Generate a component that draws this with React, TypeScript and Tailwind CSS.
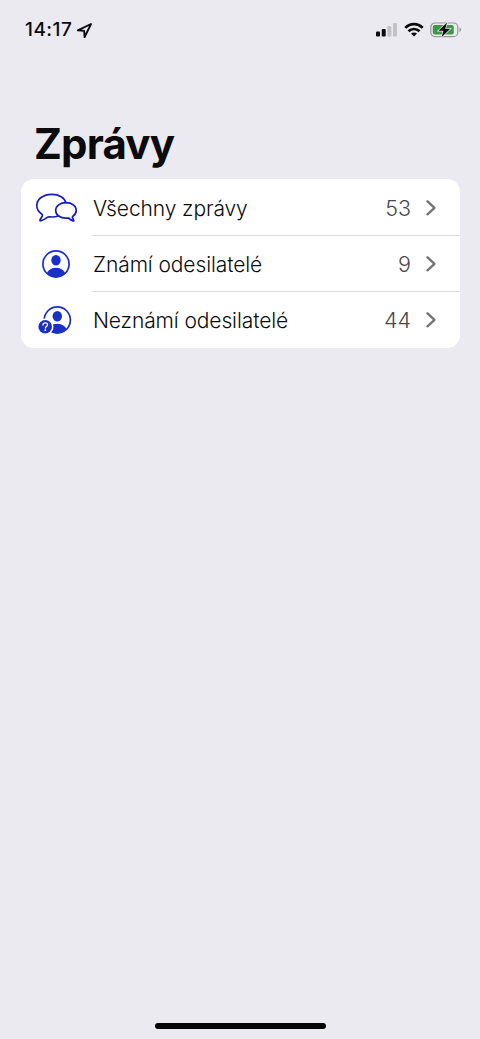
import type { ReactNode } from "react";

function BubblesIcon() {
  return (
    <svg width="44" height="32" viewBox="0 0 44 32" fill="none" stroke="#161fbe" strokeWidth="1.7" strokeLinejoin="round" strokeLinecap="round">
      <path d="M31.800 10.700C30.800 5.800 25.200 2.300 17.700 2.300 9.200 2.300 2.800 7.200 2.800 13.500c0 3.700 2.100 6.600 5.100 8.700.6.500.7.900.4 1.600-.5 1.200-1.400 2.600-2.200 3.900-.5.900 0 1.400.9 1.100 2.700-.8 4.700-2.200 6.300-3.400.7-.5 1.300-.6 2.200-.5 3.300.3 6.300 0 8.900-.9" />
      <path d="M32 10.600c-5.900 0-10.300 3.400-10.300 7.800s4.400 7.800 10.300 7.800c.9 0 1.700-.1 2.500-.2 1.400 1.200 2.900 2.300 4.600 2.900.7.200 1-.2.600-.8-.5-.9-.9-1.700-1.200-2.600-.2-.6-.1-.9.400-1.300 2.100-1.400 3.300-3.500 3.300-5.800 0-4.400-4.300-7.800-10.200-7.800z" />
    </svg>
  );
}

function PersonIcon() {
  return (
    <svg width="44" height="32" viewBox="0 0 44 32" fill="none">
      <defs>
        <clipPath id="person-circle">
          <circle cx="22" cy="16" r="13" />
        </clipPath>
      </defs>
      <ellipse cx="22" cy="12.200" rx="4.700" ry="5.200" fill="#1c2fc4" />
      <ellipse cx="22" cy="27.200" rx="9.700" ry="7.500" fill="#1c2fc4" clipPath="url(#person-circle)" />
      <circle cx="22" cy="16" r="13.100" stroke="#1c2fc4" strokeWidth="1.700" />
    </svg>
  );
}

function UnknownPersonIcon() {
  return (
    <svg width="44" height="32" viewBox="0 0 44 32" fill="none">
      <defs>
        <clipPath id="unknown-circle">
          <circle cx="23.300" cy="16" r="13" />
        </clipPath>
      </defs>
      <ellipse cx="23.300" cy="12.200" rx="4.700" ry="5.200" fill="#1c2fc4" />
      <ellipse cx="23.300" cy="27.200" rx="9.700" ry="7.500" fill="#1c2fc4" clipPath="url(#unknown-circle)" />
      <circle cx="23.300" cy="16" r="13.100" stroke="#1c2fc4" strokeWidth="1.700" />
      <circle cx="11.200" cy="22.700" r="8.300" fill="#fff" />
      <circle cx="11.200" cy="22.700" r="6.800" fill="#1c2fc4" />
      <path d="M9 21.100c0-1.400 1-2.200 2.300-2.200 1.400 0 2.300.8 2.300 1.900 0 1.700-2.200 1.700-2.200 3.200" stroke="#fff" strokeWidth="1.300" strokeLinecap="round" />
      <circle cx="11.300" cy="26.200" r=".9" fill="#fff" />
    </svg>
  );
}

function StatusBar() {
  return (
    <header className="flex h-[60px] items-center justify-between pr-[18px] pl-[25px]">
      <div className="flex items-center gap-1">
        <span className="text-[19px] leading-6 font-medium tracking-[0.5px]">14:17</span>
        <svg width="17" height="17" viewBox="0 0 17 17" fill="none" stroke="#0b0b0d" strokeWidth="1.900" strokeLinejoin="round">
          <path d="M15 2 1.800 8.300l6.400.6.400 6.200z" />
        </svg>
      </div>
      <div className="flex items-center">
        <svg width="23" height="16" viewBox="0 0 23 16">
          <rect x="1" y="9.500" width="4" height="5" rx="1" fill="#0b0b0d" />
          <rect x="6.700" y="7" width="4" height="7.500" rx="1" fill="#0b0b0d" />
          <rect x="12.400" y="4" width="4" height="10.500" rx="1" fill="#c3c2c7" />
          <rect x="18" y="1" width="4" height="13.500" rx="1" fill="#c3c2c7" />
        </svg>
        <svg className="ml-[6px]" width="20" height="16" viewBox="0 0 20 16" fill="none" stroke="#0b0b0d" strokeWidth="2.700">
          <path d="M1.300 5.900C6.300.9 13.700.9 18.700 5.900" />
          <path d="M4.500 9.300c3.200-3.100 7.800-3.100 11 0" />
          <path d="M10 14.600 7 11.600c1.700-1.600 4.300-1.600 6 0z" fill="#0b0b0d" stroke="none" />
        </svg>
        <svg className="ml-[6px]" width="32" height="18" viewBox="0 0 32 18">
          <rect x=".8" y="2" width="27" height="13.600" rx="4.200" fill="none" stroke="#98979d" strokeWidth="1.200" />
          <path d="M29.500 6.600c2 .7 2 3.700 0 4.400z" fill="#98979d" />
          <rect x="2.800" y="4" width="21" height="9.600" rx="2" fill="#3c9a46" />
          <path d="M17 1.500 8.500 9.800h4.900L11.600 16.300l8.700-8.500h-5.100z" fill="#0b0b0d" stroke="#ebeaf0" strokeWidth="1.400" paintOrder="stroke" />
        </svg>
      </div>
    </header>
  );
}

function Row({ icon, label, count, last = false }: { icon: ReactNode; label: string; count: number; last?: boolean }) {
  return (
    <li className={`flex pl-[13px] ${last ? "h-14" : "h-[57px] -mb-px"}`}>
      <span className="flex h-14 w-[58px] items-center pt-px">{icon}</span>
      <div className={`flex flex-1 items-center pt-0.5 pl-px ${last ? "" : "border-b border-[#dcdce0]"}`}>
        <span className="flex-1 translate-y-[0.5px] text-[21px] leading-7 font-light tracking-[-0.1px]">{label}</span>
        <span className="text-[21.500px] leading-7 font-light text-[#48484c]">{count}</span>
        <svg className="mr-[23px] ml-[14px]" width="12" height="18" viewBox="0 0 12 18" fill="none" stroke="#747478" strokeWidth="2.400" strokeLinecap="round" strokeLinejoin="round">
          <path d="m2.500 2.300 7 6.500-7 6.500" />
        </svg>
      </div>
    </li>
  );
}

export default function App() {
  return (
    <div className="flex h-[1039px] w-[480px] flex-col bg-[#ebeaf0] font-['Inter','Liberation_Sans',sans-serif] text-[#0b0b0d]">
      <StatusBar />
      <main className="flex-1 pt-[57px]">
        <h1 className="pl-[34px] text-[42px] leading-[54px] font-bold tracking-[-0.8px]">Zprávy</h1>
        <ul className="mt-2 mr-5 ml-[21px] rounded-[13px] bg-white pb-px">
          <Row icon={<BubblesIcon />} label="Všechny zprávy" count={53} />
          <Row icon={<PersonIcon />} label="Známí odesilatelé" count={9} />
          <Row icon={<UnknownPersonIcon />} label="Neznámí odesilatelé" count={44} last />
        </ul>
      </main>
      <footer className="flex justify-center pb-[10px]">
        <div className="h-[6px] w-[171px] rounded-full bg-[#050507]" />
      </footer>
    </div>
  );
}
